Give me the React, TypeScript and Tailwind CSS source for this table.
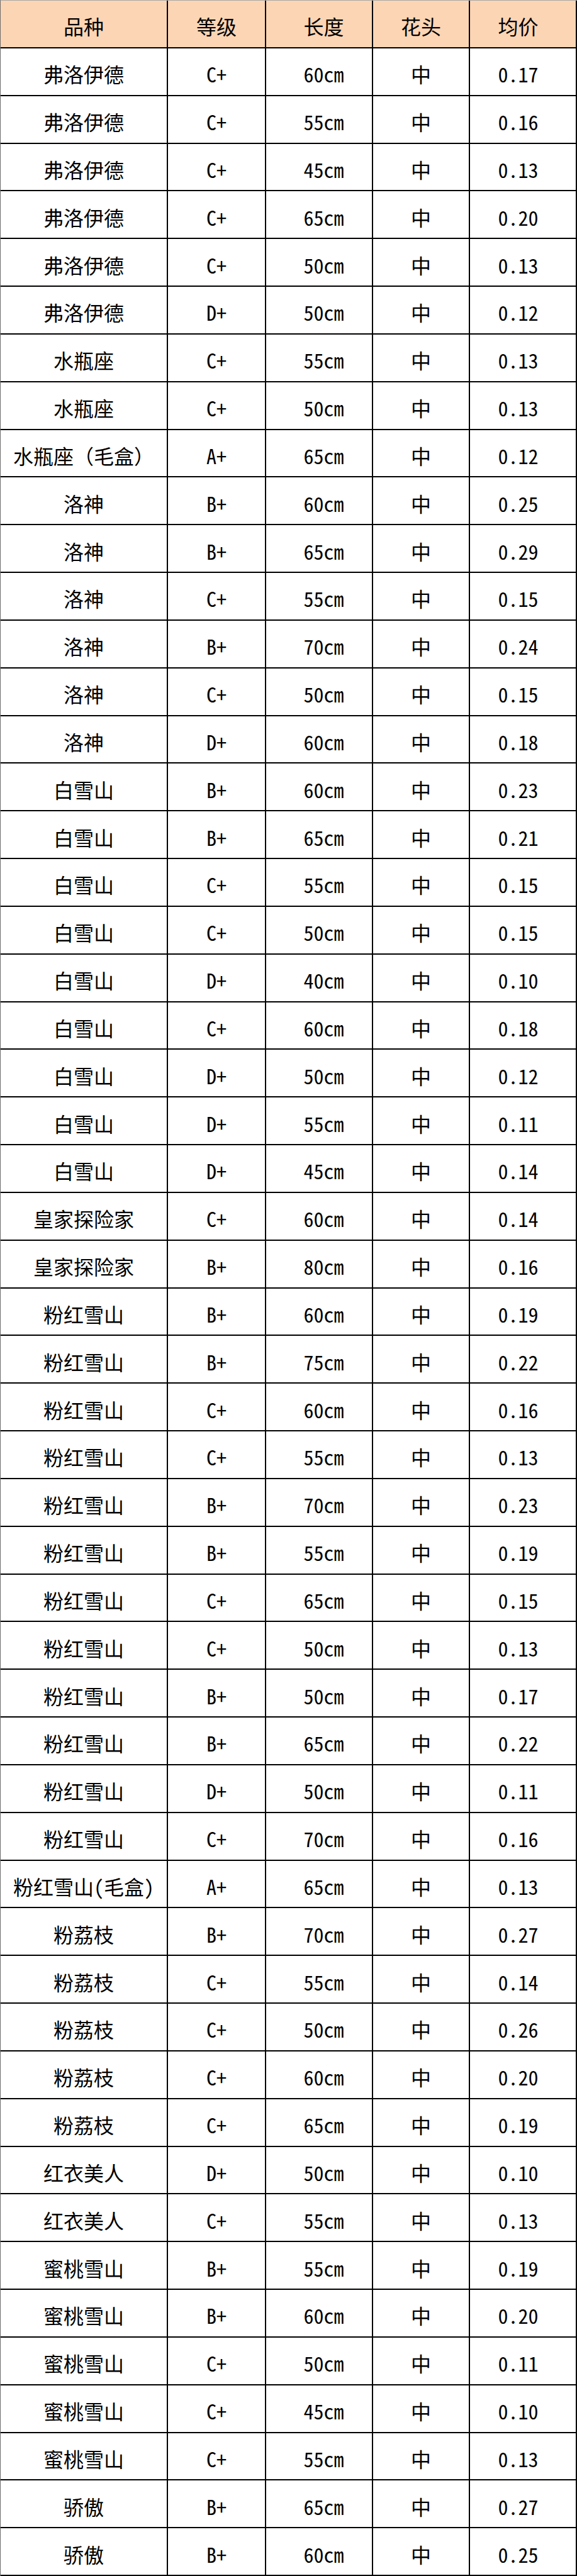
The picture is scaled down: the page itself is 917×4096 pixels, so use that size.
import React from "react";

const rows: [string, string, string, string][] = [
  ["弗洛伊德", "C+", "60cm", "0.17"],
  ["弗洛伊德", "C+", "55cm", "0.16"],
  ["弗洛伊德", "C+", "45cm", "0.13"],
  ["弗洛伊德", "C+", "65cm", "0.20"],
  ["弗洛伊德", "C+", "50cm", "0.13"],
  ["弗洛伊德", "D+", "50cm", "0.12"],
  ["水瓶座", "C+", "55cm", "0.13"],
  ["水瓶座", "C+", "50cm", "0.13"],
  ["水瓶座（毛盒）", "A+", "65cm", "0.12"],
  ["洛神", "B+", "60cm", "0.25"],
  ["洛神", "B+", "65cm", "0.29"],
  ["洛神", "C+", "55cm", "0.15"],
  ["洛神", "B+", "70cm", "0.24"],
  ["洛神", "C+", "50cm", "0.15"],
  ["洛神", "D+", "60cm", "0.18"],
  ["白雪山", "B+", "60cm", "0.23"],
  ["白雪山", "B+", "65cm", "0.21"],
  ["白雪山", "C+", "55cm", "0.15"],
  ["白雪山", "C+", "50cm", "0.15"],
  ["白雪山", "D+", "40cm", "0.10"],
  ["白雪山", "C+", "60cm", "0.18"],
  ["白雪山", "D+", "50cm", "0.12"],
  ["白雪山", "D+", "55cm", "0.11"],
  ["白雪山", "D+", "45cm", "0.14"],
  ["皇家探险家", "C+", "60cm", "0.14"],
  ["皇家探险家", "B+", "80cm", "0.16"],
  ["粉红雪山", "B+", "60cm", "0.19"],
  ["粉红雪山", "B+", "75cm", "0.22"],
  ["粉红雪山", "C+", "60cm", "0.16"],
  ["粉红雪山", "C+", "55cm", "0.13"],
  ["粉红雪山", "B+", "70cm", "0.23"],
  ["粉红雪山", "B+", "55cm", "0.19"],
  ["粉红雪山", "C+", "65cm", "0.15"],
  ["粉红雪山", "C+", "50cm", "0.13"],
  ["粉红雪山", "B+", "50cm", "0.17"],
  ["粉红雪山", "B+", "65cm", "0.22"],
  ["粉红雪山", "D+", "50cm", "0.11"],
  ["粉红雪山", "C+", "70cm", "0.16"],
  ["粉红雪山(毛盒)", "A+", "65cm", "0.13"],
  ["粉荔枝", "B+", "70cm", "0.27"],
  ["粉荔枝", "C+", "55cm", "0.14"],
  ["粉荔枝", "C+", "50cm", "0.26"],
  ["粉荔枝", "C+", "60cm", "0.20"],
  ["粉荔枝", "C+", "65cm", "0.19"],
  ["红衣美人", "D+", "50cm", "0.10"],
  ["红衣美人", "C+", "55cm", "0.13"],
  ["蜜桃雪山", "B+", "55cm", "0.19"],
  ["蜜桃雪山", "B+", "60cm", "0.20"],
  ["蜜桃雪山", "C+", "50cm", "0.11"],
  ["蜜桃雪山", "C+", "45cm", "0.10"],
  ["蜜桃雪山", "C+", "55cm", "0.13"],
  ["骄傲", "B+", "65cm", "0.27"],
  ["骄傲", "B+", "60cm", "0.25"],
];

const cell =
  "flex items-center justify-center whitespace-nowrap border-r-2 border-b-2 border-black pt-[7px] leading-none";

export default function App() {
  const header = ["品种", "等级", "长度", "花头", "均价"];
  return (
    <div className="w-[917px] h-[4096px] bg-white border-l border-t border-l-[#6b6b6b] border-t-[#a8a8a8] text-black text-[32px] font-medium font-['Noto_Sans_Mono_CJK_SC','Noto_Sans_CJK_SC',sans-serif]">
      <div className="grid h-full grid-cols-[266px_156px_170px_154px_170px] grid-rows-[repeat(54,minmax(0,1fr))]">
        <div className={`${cell} bg-[#FCD5B4]`}>{header[0]}</div>
        <div className={`${cell} bg-[#FCD5B4]`}>{header[1]}</div>
        <div className={`${cell} bg-[#FCD5B4] pl-[15px]`}>{header[2]}</div>
        <div className={`${cell} bg-[#FCD5B4]`}>{header[3]}</div>
        <div className={`${cell} bg-[#FCD5B4] pr-[15px]`}>{header[4]}</div>
        {rows.map((r, idx) => (
          <React.Fragment key={idx}>
            <div className={cell}>{r[0]}</div>
            <div className={cell}>{r[1]}</div>
            <div className={`${cell} pl-[15px]`}>{r[2]}</div>
            <div className={cell}>中</div>
            <div className={`${cell} pr-[15px]`}>{r[3]}</div>
          </React.Fragment>
        ))}
      </div>
    </div>
  );
}
